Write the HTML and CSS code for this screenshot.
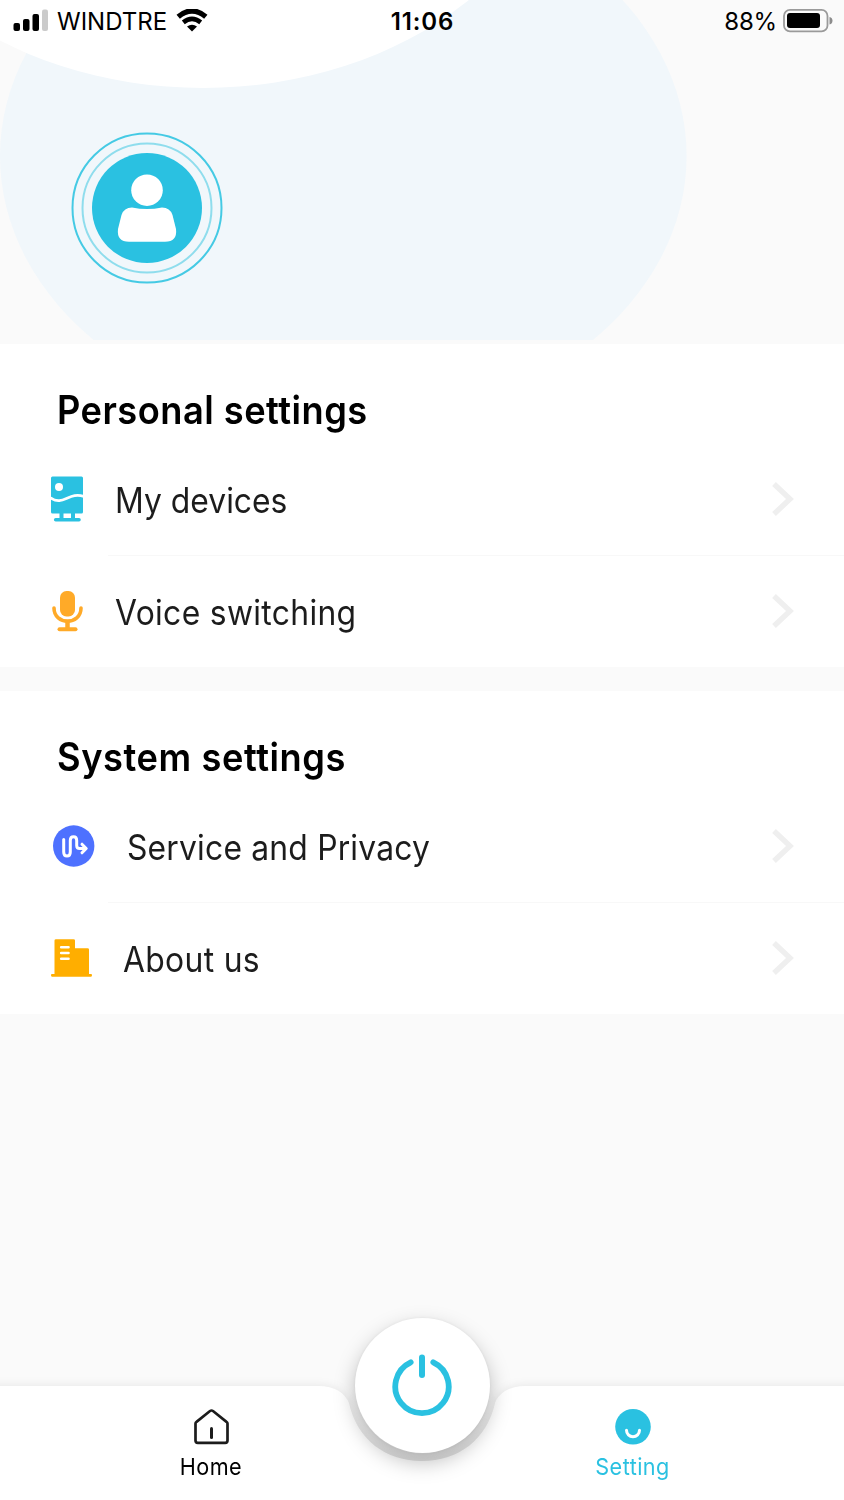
FILE: index.html
```html
<!DOCTYPE html>
<html lang="en">
    <head>
        <meta charset="utf-8">
        <meta name="viewport" content="width=device-width, initial-scale=1">
        <title>Setting</title>
        <link rel="stylesheet" href="styles.css">
    </head>
    <body>
        <div class="app">
            <div class="header">
                <svg class="header-bg" width="844" height="340" viewBox="0 0 844 340">
                    <ellipse cx="343.3" cy="156" rx="343.3" ry="268" fill="#f1f7fb"/>
                    <ellipse cx="203" cy="-201" rx="370" ry="289" fill="#fff"/>
                </svg>
                <div class="status-bar">
                    <div class="status-left">
                        <svg width="36" height="24" viewBox="0 0 36 24">
                            <rect x="0.5" y="14" width="6.5" height="8" rx="2"/>
                            <rect x="10" y="10" width="6.5" height="12" rx="2"/>
                            <rect x="19.5" y="5" width="6.5" height="17" rx="2"/>
                            <rect x="29" y="0.5" width="6" height="21.5" rx="2" fill="#cbcbcb"/>
                        </svg>
                        <span class="carrier">WINDTRE</span>
                        <svg class="wifi" width="32" height="24" viewBox="0 0 32 24">
                            <path d="M2.2 7.7Q16 -3.8 29.8 7.7" fill="none" stroke="#000" stroke-width="5.2"/>
                            <path d="M7.3 13.4Q16 6.4 24.7 13.4" fill="none" stroke="#000" stroke-width="4.6"/>
                            <path d="M11 17.6Q16 13.8 21 17.6L16 22.5Z"/>
                        </svg>
                    </div>
                    <span class="clock">11:06</span>
                    <div class="status-right">
                        <span class="percent">88%</span>
                        <svg width="50" height="24" viewBox="0 0 50 24">
                            <rect x="1" y="0.9" width="43.5" height="21.5" rx="6" fill="none" stroke="#9a9a9a" stroke-width="1.8"/>
                            <rect x="4" y="4.1" width="33" height="15" rx="3"/>
                            <path d="M46.5 7.9Q49.5 8.7 49.5 11.7T46.5 15.5Z" fill="#8c8c8c"/>
                        </svg>
                    </div>
                </div>
                <svg class="avatar" width="152" height="152" viewBox="0 0 152 152">
                    <circle cx="76" cy="76" r="74.5" fill="none" stroke="#45cae4" stroke-width="2"/>
                    <circle cx="76" cy="76" r="64.5" fill="none" stroke="#8fdded" stroke-width="2"/>
                    <circle cx="76" cy="76" r="55" fill="#2ac1e1"/>
                    <circle cx="76" cy="58.2" r="15.8" fill="#fff"/>
                    <path d="M61 75.5Q76 78.5 91 75.5Q99 75.5 101.5 83L105 97Q106.500 109.700 94 109.700H58Q45.500 109.700 47 97L50.500 83Q53 75.500 61 75.500Z" fill="#fff"/>
                </svg>
            </div>

            <div class="section">
                <h2><span>Personal settings</span></h2>
                <div class="row">
                    <svg class="icon icon-device" width="33" height="46" viewBox="0 0 33 46">
                        <rect x="0" y="0.5" width="32" height="37" rx="1.5" fill="#2ac1e1"/>
                        <circle cx="8" cy="11" r="4" fill="#fff"/>
                        <path d="M-0.5 21.8C12 31 18 15 33 20.5" fill="none" stroke="#fff" stroke-width="2.8"/>
                        <path d="M10.5 37V43M22 37V43" stroke="#2ac1e1" stroke-width="4"/>
                        <path d="M4.7 43.7H28" stroke="#2ac1e1" stroke-width="3.6" stroke-linecap="round"/>
                    </svg>
                    <span class="label label-devices">My devices</span>
                    <svg class="chevron" width="22" height="34" viewBox="0 0 22 34"><path d="M2 2L18 17L2 32" fill="none" stroke="#efefef" stroke-width="5.4"/></svg>
                </div>
                <div class="row">
                    <svg class="icon icon-voice" width="31" height="41" viewBox="0 0 31 41">
                        <rect x="8" y="0" width="15" height="25.5" rx="6.5" fill="#ffaa28"/>
                        <path d="M2 17C2 34.5 29 34.5 29 17" fill="none" stroke="#ffaa28" stroke-width="3.6" stroke-linecap="round"/>
                        <path d="M15.5 30V38" fill="none" stroke="#ffaa28" stroke-width="4.5"/>
                        <path d="M7.5 38.2H23.5" stroke="#ffaa28" stroke-width="4" stroke-linecap="round"/>
                    </svg>
                    <span class="label label-voice">Voice switching</span>
                    <svg class="chevron" width="22" height="34" viewBox="0 0 22 34"><path d="M2 2L18 17L2 32" fill="none" stroke="#efefef" stroke-width="5.4"/></svg>
                </div>
            </div>

            <div class="section">
                <h2><span class="h-system">System settings</span></h2>
                <div class="row">
                    <svg class="icon icon-service" width="42" height="42" viewBox="0 0 42 42">
                        <circle cx="20.7" cy="21" r="20.7" fill="#4e71ff"/>
                        <path d="M10.7 14.5V27Q10.7 31 14 31T17.3 27V15.5Q17.3 11.7 20.5 11.7T23.7 15.5V20.5Q23.7 23.5 26.7 23.5H32.7" fill="none" stroke="#fff" stroke-width="3" stroke-linecap="round"/>
                        <path d="M29 19.2L33.2 23.5L29 27.8" fill="none" stroke="#fff" stroke-width="3" stroke-linecap="round" stroke-linejoin="round"/>
                    </svg>
                    <span class="label label-service">Service and Privacy</span>
                    <svg class="chevron" width="22" height="34" viewBox="0 0 22 34"><path d="M2 2L18 17L2 32" fill="none" stroke="#efefef" stroke-width="5.4"/></svg>
                </div>
                <div class="row">
                    <svg class="icon icon-about" width="41" height="38" viewBox="0 0 41 38">
                        <path d="M3.5 35V1.5Q3.5 0.3 5 0.3H22.5Q24 0.3 24 1.5V9.2H36.5Q38 9.2 38 10.5V35H40Q41 35 41 36.3T40 37.7H1Q0 37.7 0 36.3T1 35Z" fill="#ffae00"/>
                        <path d="M10.2 8.3H17.5M10.2 14H17.5M10.2 19.7H17.5" stroke="#fff" stroke-width="2.6" stroke-linecap="round"/>
                    </svg>
                    <span class="label label-about">About us</span>
                    <svg class="chevron" width="22" height="34" viewBox="0 0 22 34"><path d="M2 2L18 17L2 32" fill="none" stroke="#efefef" stroke-width="5.4"/></svg>
                </div>
            </div>

            <div class="tab-bar">
                <svg class="tab-bg" width="844" height="200" viewBox="0 0 844 200">
                    <defs>
                        <linearGradient id="notch" x1="0" y1="0" x2="0" y2="1">
                            <stop offset="0" stop-color="#000" stop-opacity="0"/>
                            <stop offset="1" stop-color="#000" stop-opacity="0.06"/>
                        </linearGradient>
                    </defs>
                    <path class="tab-shape" d="M-20 86H318C335 86 345 93 349 103C357 140 386 161 422 161S487 140 495 103C499 93 509 86 526 86H864V230H-20Z"/>
                </svg>
                <div class="power">
                    <svg width="60" height="64" viewBox="0 -1.5 60 64">
                        <path d="M18.7 6.8A26.7 26.7 0 1 0 41.3 6.8" fill="none" stroke="#2ac1e1" stroke-width="5.8" stroke-linecap="round"/>
                        <path d="M30 2V19.5" stroke="#2ac1e1" stroke-width="6" stroke-linecap="round"/>
                    </svg>
                </div>
                <svg class="notch-shade" width="160" height="90" viewBox="342 86 160 90">
                    <path d="M348 99C356 140 386 161 422 161S488 140 496 99L489.5 86A67.5 67.5 0 0 1 354.5 86Z" fill="url(#notch)"/>
                </svg>
                <div class="tab tab-home">
                    <svg width="36" height="36" viewBox="0 0 36 36">
                        <path d="M2.5 14.5Q2.5 13.5 3.5 12.8L17 2Q18.5 1 20 2L33.5 12.8Q34.5 13.5 34.5 14.5V31.5Q34.5 33.8 32.2 33.8H4.8Q2.5 33.8 2.5 31.5Z" fill="none" stroke="#1c1c1c" stroke-width="2.7"/>
                        <path d="M18.5 19.5V28.5" stroke="#1c1c1c" stroke-width="3" stroke-linecap="round"/>
                    </svg>
                    <span>Home</span>
                </div>
                <div class="tab tab-setting">
                    <svg width="36" height="36" viewBox="0 0 36 36">
                        <circle cx="18" cy="17.8" r="17.8" fill="#2ac1e1"/>
                        <path d="M11.5 21.3A6.5 6.5 0 0 0 24.5 21.3" fill="none" stroke="#fff" stroke-width="3" stroke-linecap="round"/>
                    </svg>
                    <span>Setting</span>
                </div>
            </div>
        </div>
    </body>
</html>
```
FILE: styles.css
```css
body {
    margin: 0;
    background: #fafafa;
    font-family: Inter, "Liberation Sans", sans-serif;
}
.app {
    width: 844px;
    height: 1500px;
    overflow: hidden;
    display: flex;
    flex-direction: column;
    background: #fafafa;
}
svg {
    display: block;
    flex-shrink: 0;
}
.header {
    height: 344px;
    position: relative;
}
.header-bg {
    position: absolute;
    top: 0;
    left: 0;
}
.status-bar {
    position: relative;
    display: grid;
    grid-template-columns: 1fr auto 1fr;
    align-items: center;
    height: 41px;
    padding: 0 11px 0 13px;
    font-size: 24px;
}
.status-bar span {
    padding-top: 2px;
}
.status-left, .status-right {
    display: flex;
    align-items: center;
}
.status-right {
    justify-content: flex-end;
    gap: 6px;
}
.carrier {
    margin-left: 8px;
}
.wifi {
    margin-left: 9px;
}
.clock {
    font-weight: 600;
    letter-spacing: 0.9px;
    margin-right: 1px;
}
.percent {
    letter-spacing: -0.2px;
}
.avatar {
    position: relative;
    margin: 91px 0 0 71px;
}
.section {
    height: 323px;
    margin-bottom: 24px;
    background: #fff;
}
h2 {
    margin: 0;
    padding-left: 57px;
    height: 99px;
    line-height: 131px;
    font-size: 39px;
    font-weight: 600;
    color: #000;
}
h2 span, .label {
    display: inline-block;
    transform: scaleX(0.91);
    transform-origin: left center;
    white-space: nowrap;
}
h2 span {
    transform: scaleX(0.93);
    letter-spacing: 0.5px;
}
.h-system {
    letter-spacing: 0.6px;
}
.row {
    display: flex;
    align-items: center;
    height: 112px;
    padding-right: 50px;
}
.row + .row {
    background: linear-gradient(#f8f8f8, #f8f8f8) 108px 0 / 736px 1px no-repeat;
}
.icon {
    margin-left: 51px;
}
.icon-device {
    margin-bottom: 1px;
}
.icon-voice {
    margin-left: 52px;
}
.icon-service {
    margin-left: 53px;
}
.label {
    margin-left: 32px;
    padding-top: 2px;
    font-size: 35px;
    letter-spacing: 0.35px;
    color: #1c1c1c;
}
.label-devices {
    margin-left: 31px;
    letter-spacing: 0;
}
.label-service {
    letter-spacing: 0.2px;
}
.label-about {
    margin-left: 31px;
}
.chevron {
    margin-left: auto;
}
.tab-bar {
    position: relative;
    display: flex;
    height: 114px;
    margin-top: auto;
}
.tab-bg {
    position: absolute;
    left: 0;
    top: -86px;
}
.tab-shape {
    fill: #fff;
    filter: drop-shadow(0 -1px 4px rgba(0, 0, 0, 0.07));
}
.power {
    position: absolute;
    left: 354.5px;
    top: -68px;
    width: 135px;
    height: 135px;
    border-radius: 50%;
    background: #fff;
    box-shadow: 0 9px 21px rgba(0, 0, 0, 0.26), 0 0 3px rgba(0, 0, 0, 0.06);
    display: flex;
    align-items: center;
    justify-content: center;
}
.notch-shade {
    position: absolute;
    left: 342px;
    top: 0;
}
.tab {
    position: relative;
    flex: 1;
    display: flex;
    flex-direction: column;
    align-items: center;
    padding-top: 23px;
    font-size: 23.5px;
    color: #000;
}
.tab span {
    margin-top: 8px;
    line-height: 28px;
    transform: scaleX(0.92);
    letter-spacing: 0.5px;
}
.tab-setting {
    color: #2ac1e1;
}
```
